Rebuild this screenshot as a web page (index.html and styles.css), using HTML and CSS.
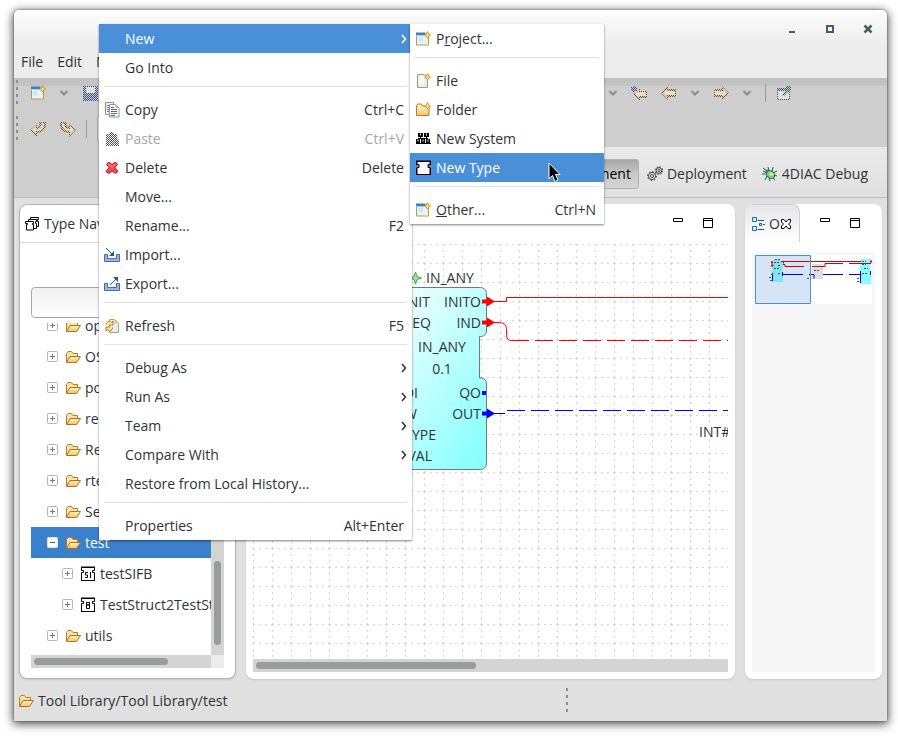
FILE: index.html
```html
<!DOCTYPE html>
<html lang="en">

<head>
    <meta charset="utf-8">
    <title>Type Navigator</title>
    <link rel="stylesheet" href="styles.css">
</head>

<body>

    <!-- icon set -->
    <svg class="icon-defs" width="0" height="0" aria-hidden="true">
        <defs>
            <linearGradient id="folder-fill" x1="0" y1="0" x2="0" y2="1">
                <stop offset="0" stop-color="#fff3c4" />
                <stop offset="1" stop-color="#f5c469" />
            </linearGradient>
            <linearGradient id="block-fill" x1="0" y1="0" x2="1" y2="1">
                <stop offset="0.2" stop-color="#eaffff" />
                <stop offset="1" stop-color="#80ffff" />
            </linearGradient>
            <pattern id="grid" width="19" height="19" patternUnits="userSpaceOnUse">
                <path d="M0 .5H19M.5 0V19" stroke="#d6d6d6" stroke-dasharray="2 4" fill="none" />
            </pattern>
            <pattern id="dither" width="2" height="2" patternUnits="userSpaceOnUse">
                <path d="M0 0h1v1H0zM1 1h1v1H1z" fill="#fbf3c8" />
            </pattern>
            <pattern id="dither-brown" width="2" height="2" patternUnits="userSpaceOnUse">
                <path d="M0 0h1v1H0zM1 1h1v1H1z" fill="#7d5210" />
            </pattern>
            <pattern id="dither-blue" width="2" height="2" patternUnits="userSpaceOnUse">
                <path d="M0 0h1v1H0zM1 1h1v1H1z" fill="#3a4f86" />
            </pattern>
            <pattern id="dither-gray" width="2" height="2" patternUnits="userSpaceOnUse">
                <path d="M0 0h1v1H0zM1 1h1v1H1z" fill="#55504c" />
            </pattern>
            <pattern id="dither-green" width="2" height="2" patternUnits="userSpaceOnUse">
                <path d="M0 0h1v1H0zM1 1h1v1H1z" fill="#2f6a35" />
            </pattern>
            <pattern id="dither-white" width="2" height="2" patternUnits="userSpaceOnUse">
                <path d="M0 0h1v1H0zM1 1h1v1H1z" fill="#f4f8fc" />
            </pattern>
            <symbol id="i-spark" viewBox="0 0 16 16">
                <path d="M12.500 0L14 2.500 16 4l-2 1.500L12.500 7.500 11 5.500 9 4l2-1.500z" fill="#c9970f" />
                <path d="M12.500 2v4M10.500 4h4" stroke="#fff3a8" fill="none" />
            </symbol>
            <symbol id="i-wizard" viewBox="0 0 16 16">
                <path d="M1.500 2.500h12v11.500h-12z" fill="#e6f3fc" stroke="#b99a48" />
                <path d="M3 6h5v4H3z" fill="#cde6f8" />
                <path d="M8 13c4-1 5-4 5-6v6.500z" fill="#fff0b8" />
                <path d="M1 1.500h9v3H1z" fill="#3f7cc4" />
                <path d="M1 4h9v1H1z" fill="#a8cdf0" />
                <use href="#i-spark" />
            </symbol>
            <symbol id="i-file" viewBox="0 0 16 16">
                <path d="M2.500 1.500h7l3 3v10h-10z" fill="#e4ebfa" stroke="#b09a5e" />
                <path d="M4 3h5v9H4z" fill="#f6f9ff" />
                <use href="#i-spark" />
            </symbol>
            <symbol id="i-newfolder" viewBox="0 0 16 16">
                <path d="M1.500 13.500v-10l1-1.500h4l1 2h6.500v9.500z" fill="url(#folder-fill)" stroke="#b9792c" />
                <path d="M2 6.500h12" stroke="#fff7d8" />
                <use href="#i-spark" />
            </symbol>
            <symbol id="i-folder" viewBox="0 0 16 16">
                <path d="M1.500 13V4.500L3 2.500h3.500l1.500 2h4.500V7" fill="#fbe3a0" stroke="#b87a30" />
                <path d="M1.500 13.500l3.500-6h10.500l-4 6z" fill="url(#folder-fill)" stroke="#b0701f" />
            </symbol>
            <symbol id="i-system" viewBox="0 0 16 16">
                <path d="M3 2h5v4H3zM9 2h5v4H9zM1 8h4v4H1zM6 8h4v4H6zM11 8h4v4h-4z" fill="#000" />
                <path d="M5.500 5v3M11.500 5v3M3 7.500h10" fill="none" stroke="#000" />
                <path d="M5 3.500h1M11 3.500h1M2.500 9.500h1M7.500 9.500h1M12.500 9.500h1" stroke="#fff" stroke-width="2" />
                <path d="M1 12.500h15" stroke="#000" />
            </symbol>
            <symbol id="i-block" viewBox="0 0 16 16">
                <path d="M2 1.500h13v3h-2v3h2v7H2v-7h2v-3H2z" fill="#fff" stroke="#000" />
                <path d="M1 1h15M1 14.500h15M1.500 8v6M15.500 8v6M1.500 1v4M15.500 1v4" stroke="#000" />
            </symbol>
            <symbol id="i-si" viewBox="0 0 16 16">
                <path d="M1.500 1.500h13v3h-2v2h2v8h-13v-8h2v-2h-2z" fill="#fff" stroke="#000" />
                <path d="M1 1h14M1 14.500h14" stroke="#000" />
                <path d="M8 6.500H5.500v2.500H7.500v2.500H5M10.500 6v6" fill="none" stroke="#000" />
            </symbol>
            <symbol id="i-basic" viewBox="0 0 16 16">
                <path d="M1.500 1.500h13v3h-2v2h2v8h-13v-8h2v-2h-2z" fill="#fff" stroke="#000" />
                <path d="M1 1h14M1 14.500h14" stroke="#000" />
                <path d="M6.500 5.500h3v2.500h-3zM6.500 8h3v3.500h-3z" fill="none" stroke="#000" />
            </symbol>
            <symbol id="i-copy" viewBox="0 0 16 16">
                <path d="M1.500 .500h8v12h-8z" fill="#eef3fc" stroke="#a8904e" />
                <path d="M3 3.500h3M3 5.500h2M3 7.500h2M3 9.500h2" stroke="#5272b8" />
                <path d="M5.500 2.500h6l3.500 3.500v9h-9.500z" fill="#fff" stroke="#8d93a8" />
                <path d="M11.500 2.500v3.500H15z" fill="#d9b55a" />
                <path d="M7 5.500h3M7 7.500h6M7 9.500h6M7 11.500h6M7 13.500h4" stroke="#4668b0" />
            </symbol>
            <symbol id="i-paste" viewBox="0 0 16 16">
                <path d="M2 3h3l1-2h3l1 2h3v4l2 2v6H2z" fill="url(#dither-gray)" />
                <path d="M7 7h5l2 2v6H7z" fill="url(#dither-blue)" />
            </symbol>
            <symbol id="i-delete" viewBox="0 0 16 16">
                <path d="M2.500 4l2.500-2 3 2.500L11 2l2.500 2-2.500 3.500 3 4-2.500 2L8 11l-3 2.500-3-2 3-4z" fill="#ee4a52" stroke="#c01c28" />
                <path d="M4 4l4 3L12 4" fill="none" stroke="#f79aa0" />
            </symbol>
            <symbol id="i-import" viewBox="0 0 16 16">
                <path d="M.500 7.500h3v4h9v-4h3v7H.500z" fill="#9db4de" stroke="#4a68a8" />
                <path d="M2 1l7 7" stroke="#2a5f9e" />
                <path d="M10 4v5H5z" fill="#175a9c" />
            </symbol>
            <symbol id="i-export" viewBox="0 0 16 16">
                <path d="M.500 7.500h3v4h9v-4h3v7H.500z" fill="#9db4de" stroke="#4a68a8" />
                <path d="M6 9l7-7" stroke="#2a5f9e" />
                <path d="M9 1h5v5z" fill="#175a9c" />
            </symbol>
            <symbol id="i-refresh" viewBox="0 0 16 16">
                <path d="M5.500 1.500h5l4 4v9h-9z" fill="#e6edfb" stroke="#b3a06b" />
                <path d="M10.500 1.500v4h4z" fill="#e6c878" />
                <path d="M2.500 6.500c0-4 4-4 5-2L9 3v4H5" fill="#ffe9a6" stroke="#b9780e" />
                <path d="M8.500 9.500c0 4-4 4-5 2L2 13V9h4" fill="#ffe9a6" stroke="#b9780e" />
            </symbol>
            <symbol id="i-left" viewBox="0 0 16 16">
                <path d="M0 8l7-7v3h8v8H7v3z" fill="url(#dither-brown)" />
                <path d="M2 8l4-4v2h8v4H6v2z" fill="#cecece" />
                <path d="M2 8l4-4v2h8v4H6v2z" fill="url(#dither)" />
            </symbol>
            <symbol id="i-right" viewBox="0 0 16 16">
                <path d="M16 8L9 1v3H1v8h8v3z" fill="url(#dither-brown)" />
                <path d="M14 8l-4-4v2H2v4h8v2z" fill="#cecece" />
                <path d="M14 8l-4-4v2H2v4h8v2z" fill="url(#dither)" />
            </symbol>
            <symbol id="i-lastedit" viewBox="0 0 16 16">
                <path d="M2 9l7-6v3h7v7H9v3z" fill="url(#dither-brown)" />
                <path d="M4 9l4-4v2h7v4H8v2z" fill="#cecece" />
                <path d="M4 9l4-4v2h7v4H8v2z" fill="url(#dither)" />
                <path d="M0 2h6v4H0zM2 1h2v6H2z" fill="url(#dither-blue)" />
            </symbol>
            <symbol id="i-undo" viewBox="0 0 16 16">
                <path d="M0 9l7-6v3c2 0 3-2 2-5h7c1 6-3 11-9 11v4z" fill="url(#dither-brown)" />
                <path d="M2 9l4-4v3c4 0 6-2 6-6h2c0 5-3 8-8 8v3z" fill="#cecece" />
                <path d="M2 9l4-4v3c4 0 6-2 6-6h2c0 5-3 8-8 8v3z" fill="url(#dither)" />
            </symbol>
            <symbol id="i-redo" viewBox="0 0 16 16">
                <path d="M16 9L9 3v3C7 6 6 4 7 1H0c-1 6 3 11 9 11v4z" fill="url(#dither-brown)" />
                <path d="M14 9l-4-4v3C6 8 4 6 4 2H2c0 5 3 8 8 8v3z" fill="#cecece" />
                <path d="M14 9l-4-4v3C6 8 4 6 4 2H2c0 5 3 8 8 8v3z" fill="url(#dither)" />
            </symbol>
            <symbol id="i-save" viewBox="0 0 16 16">
                <path d="M1 1h15v15H1z" fill="url(#dither-blue)" />
                <path d="M4 2h9v6H4z" fill="#cecece" />
                <path d="M4 2h9v6H4z" fill="url(#dither-white)" />
            </symbol>
            <symbol id="i-pin" viewBox="0 0 16 16">
                <path d="M1 3h13v12H1z" fill="url(#dither-gray)" />
                <path d="M2 6h11v8H2z" fill="#cecece" />
                <path d="M2 6h11v8H2z" fill="url(#dither-white)" />
                <path d="M1 3h8v3H1z" fill="url(#dither-blue)" />
                <path d="M10 1h5v5l-3 1-4 4-2-1 4-5z" fill="url(#dither-green)" />
            </symbol>
            <symbol id="i-chevron" viewBox="0 0 16 16">
                <path d="M4.500 6L8 9.500 11.500 6" fill="none" stroke="#8c8e8e" stroke-width="2" />
            </symbol>
            <symbol id="i-types" viewBox="0 0 16 16">
                <path d="M6.500 1.500h8v2h-1v2h1v5h-8z" fill="#fff" stroke="#000" />
                <path d="M4.500 3.500h8v2h-1v2h1v5h-8z" fill="#fff" stroke="#000" />
                <path d="M1.500 5.500h8v2h-1v1h1v5.500h-7v-5.500h1v-1h-2z" fill="#fff" stroke="#000" />
            </symbol>
            <symbol id="i-gears" viewBox="0 0 16 16">
                <circle cx="5" cy="10" r="3.500" fill="#fff" stroke="#333" />
                <circle cx="5" cy="10" r="4.500" fill="none" stroke="#333" stroke-dasharray="1.500 2" />
                <circle cx="5" cy="10" r="1.500" fill="#fff" stroke="#333" />
                <circle cx="12" cy="4.500" r="2.800" fill="#fff" stroke="#333" />
                <circle cx="12" cy="4.500" r="3.800" fill="none" stroke="#333" stroke-dasharray="1.500 1.500" />
                <circle cx="12" cy="4.500" r="1" fill="#fff" stroke="#333" />
            </symbol>
            <symbol id="i-bug" viewBox="0 0 16 16">
                <path d="M1 2l4 3M6 1l1 4M11 1l-1 5M15 5l-4 2M15 10l-4-1M13 14l-3-3M8 15l-1-4M3 14l2-4M0 8h5M1 5l4 2" stroke="#1f5a52" fill="none" />
                <ellipse cx="8.500" cy="8.500" rx="4.500" ry="3.500" transform="rotate(40 8.500 8.500)" fill="#8fd06c" stroke="#17705f" />
                <ellipse cx="9.500" cy="8" rx="2" ry="1.500" fill="#e2f7b0" />
                <circle cx="5" cy="5" r="1.500" fill="#247c78" />
            </symbol>
            <symbol id="i-outline" viewBox="0 0 16 16">
                <path d="M1.500 1.500h4v4h-4zM1.500 10.500h4v4h-4z" fill="#d8ecfa" stroke="#1b6fa8" />
                <path d="M8.500 7.500h2v2h-2z" fill="#fff" stroke="#14578a" />
                <path d="M7 4.500h6M12 8.500h2M7 13.500h6" stroke="#14578a" />
            </symbol>
            <symbol id="i-close" viewBox="0 0 16 16">
                <path d="M3.500 3.500h2.500l2 2.500 2-2.500h2.500v2.500l-2 2 2 2v2.500H10l-2-2.500-2 2.500H3.500V10l2-2-2-2z" fill="#fff" stroke="#000" />
            </symbol>
            <symbol id="i-min" viewBox="0 0 16 16">
                <path d="M3.500 3.500h9v3h-9z" fill="#fff" stroke="#000" />
            </symbol>
            <symbol id="i-max" viewBox="0 0 16 16">
                <path d="M3.500 3.500h9v9h-9zM3.500 5.500h9" fill="#fff" stroke="#000" />
            </symbol>
            <symbol id="i-plus" viewBox="0 0 16 16">
                <rect x="2.500" y="2.500" width="10" height="10" rx="1" fill="#fff" stroke="#b4b4b4" />
                <path d="M5 7.500h5M7.500 5v5" stroke="#777" />
            </symbol>
            <symbol id="i-minus" viewBox="0 0 16 16">
                <rect x="2.500" y="2.500" width="10" height="10" rx="1" fill="#fff" stroke="#d8e4f0" />
                <path d="M5 7.500h5" stroke="#555" />
            </symbol>
        </defs>
    </svg>

    <div class="window">
        <header class="titlebar">
            <div class="window-controls">
                <button type="button" aria-label="Minimize"><svg class="icon"><path d="M5 10h6v2H5z" fill="#4b5c64" /></svg></button>
                <button type="button" aria-label="Maximize"><svg class="icon"><path d="M5 5h6v6H5z" fill="none" stroke="#4b5c64" stroke-width="2" /></svg></button>
                <button type="button" aria-label="Close"><svg class="icon"><path d="M4.500 4.500l7 7M11.500 4.500l-7 7" stroke="#4b5c64" stroke-width="2.500" /></svg></button>
            </div>
            <nav class="menubar">
                <button type="button">File</button>
                <button type="button">Edit</button>
                <button type="button">Navigate</button>
            </nav>
        </header>

        <div class="toolbar">
            <div class="tool-row">
                <span class="grip"></span>
                <button type="button" aria-label="New"><svg class="icon"><use href="#i-wizard" /></svg></button>
                <button type="button" aria-label="New options"><svg class="icon"><use href="#i-chevron" /></svg></button>
                <button type="button" aria-label="Save"><svg class="icon"><use href="#i-save" /></svg></button>
                <div class="tool-history">
                    <button type="button" aria-label="More"><svg class="icon"><use href="#i-chevron" /></svg></button>
                    <button type="button" aria-label="Last edit"><svg class="icon"><use href="#i-lastedit" /></svg></button>
                    <button type="button" class="spaced" aria-label="Back"><svg class="icon"><use href="#i-left" /></svg></button>
                    <button type="button" aria-label="Back history"><svg class="icon"><use href="#i-chevron" /></svg></button>
                    <button type="button" aria-label="Forward"><svg class="icon"><use href="#i-right" /></svg></button>
                    <button type="button" aria-label="Forward history"><svg class="icon"><use href="#i-chevron" /></svg></button>
                    <span class="tool-sep"></span>
                    <button type="button" aria-label="Pin editor"><svg class="icon"><use href="#i-pin" /></svg></button>
                </div>
            </div>
            <div class="tool-row">
                <span class="grip"></span>
                <button type="button" aria-label="Undo"><svg class="icon"><use href="#i-undo" /></svg></button>
                <button type="button" class="spaced" aria-label="Redo"><svg class="icon"><use href="#i-redo" /></svg></button>
                <span class="tool-sep"></span>
                <input class="zoom-box" type="text" aria-label="Zoom">
            </div>
        </div>

        <div class="perspectives">
            <div class="perspective-list">
                <button type="button" class="active">Type Management</button>
                <button type="button"><svg class="icon"><use href="#i-gears" /></svg>Deployment</button>
                <button type="button"><svg class="icon"><use href="#i-bug" /></svg>4DIAC Debug</button>
            </div>
        </div>

        <main class="workbench">
            <section class="panel navigator">
                <div class="tabs">
                    <span class="tab"><svg class="icon"><use href="#i-types" /></svg>Type Navigator</span>
                </div>
                <input class="filter" type="text" aria-label="Filter types">
                <div class="tree-scroll">
                    <ul class="tree">
                        <li><svg class="icon"><use href="#i-plus" /></svg><svg class="icon"><use href="#i-folder" /></svg>opc</li>
                        <li><svg class="icon"><use href="#i-plus" /></svg><svg class="icon"><use href="#i-folder" /></svg>OSCAT</li>
                        <li><svg class="icon"><use href="#i-plus" /></svg><svg class="icon"><use href="#i-folder" /></svg>pop</li>
                        <li><svg class="icon"><use href="#i-plus" /></svg><svg class="icon"><use href="#i-folder" /></svg>rec</li>
                        <li><svg class="icon"><use href="#i-plus" /></svg><svg class="icon"><use href="#i-folder" /></svg>Res</li>
                        <li><svg class="icon"><use href="#i-plus" /></svg><svg class="icon"><use href="#i-folder" /></svg>rtev</li>
                        <li><svg class="icon"><use href="#i-plus" /></svg><svg class="icon"><use href="#i-folder" /></svg>Seg</li>
                        <li class="selected"><svg class="icon"><use href="#i-minus" /></svg><svg class="icon"><use href="#i-folder" /></svg>test</li>
                        <li class="child"><svg class="icon"><use href="#i-plus" /></svg><svg class="icon"><use href="#i-si" /></svg>testSIFB</li>
                        <li class="child"><svg class="icon"><use href="#i-plus" /></svg><svg class="icon"><use href="#i-basic" /></svg>TestStruct2TestStruct</li>
                        <li><svg class="icon"><use href="#i-plus" /></svg><svg class="icon"><use href="#i-folder" /></svg>utils</li>
                    </ul>
                    <div class="vscroll"><span class="thumb"></span></div>
                    <div class="hscroll"><span class="thumb"></span></div>
                    <div class="corner"></div>
                </div>
            </section>

            <section class="panel editor">
                <div class="panel-buttons">
                    <button type="button" aria-label="Minimize view"><svg class="icon"><use href="#i-min" /></svg></button>
                    <button type="button" aria-label="Maximize view"><svg class="icon"><use href="#i-max" /></svg></button>
                </div>
                <svg class="canvas">
                    <rect width="100%" height="100%" fill="url(#grid)" />
                    <path d="M162.500 28l1.500 4.500 4.500 1.500-4.500 1.500-1.500 4.500-1.500-4.500-4.500-1.500 4.500-1.500z" fill="#a8dca8" stroke="#3da83d" />
                    <text x="173" y="39">IN_ANY</text>
                    <path d="M117.500 49.500a6 6 0 0 1 6-6h104a6 6 0 0 1 6 6V87a6 6 0 0 1-5 5.500h-2V134h2a6 6 0 0 1 5 6v79.500a6 6 0 0 1-6 6h-104a6 6 0 0 1-6-6z" fill="url(#block-fill)" stroke="#6d7a7a" />
                    <g text-anchor="end">
                        <text x="177" y="63">INIT</text>
                        <text x="178" y="84">REQ</text>
                        <text x="165" y="154">QI</text>
                        <text x="164" y="175">W</text>
                        <text x="183" y="196">TYPE</text>
                        <text x="179" y="217">VAL</text>
                        <text x="228" y="63">INITO</text>
                        <text x="228" y="84">IND</text>
                        <text x="228" y="154">QO</text>
                        <text x="228" y="175">OUT</text>
                    </g>
                    <g text-anchor="middle">
                        <text x="189" y="108">IN_ANY</text>
                        <text x="189" y="130">0.1</text>
                    </g>
                    <!-- event connections -->
                    <path d="M229 55.500h5v-3l8 5-8 5v-3h-5zM229 76.500h5v-3l8 5-8 5v-3h-5z" fill="#f00" />
                    <path d="M240 57.500h13.500v-4H1600M240 78.500h6q7.500 0 7.500 7v5q0 6 5 6" fill="none" stroke="#f00" />
                    <path d="M258 96.500H1600" fill="none" stroke="#f00" stroke-dasharray="18 6" />
                    <!-- data connections -->
                    <path d="M229 147h4v4h-4zM229 167.500h5v-3l8 5-8 5v-3h-5z" fill="#00f" />
                    <path d="M240 169.500h12" fill="none" stroke="#00a" />
                    <path d="M254 166.500H1600" fill="none" stroke="#00f" stroke-dasharray="18 6" />
                    <path d="M446 181h70v15h-70z" fill="#fff" />
                    <text x="446" y="193">INT#</text>
                </svg>
                <div class="hscroll"><span class="thumb"></span></div>
            </section>

            <section class="panel outline">
                <div class="panel-head">
                    <span class="tab"><svg class="icon"><use href="#i-outline" /></svg>O<svg class="icon close"><use href="#i-close" /></svg></span>
                    <div class="panel-buttons">
                        <button type="button" aria-label="Minimize outline"><svg class="icon"><use href="#i-min" /></svg></button>
                        <button type="button" aria-label="Maximize outline"><svg class="icon"><use href="#i-max" /></svg></button>
                    </div>
                </div>
                <div class="overview">
                    <svg class="thumbnail" viewBox="0 0 123 56">
                        <path d="M3 3h117v49H3z" fill="#fff" />
                        <path d="M3.500 3.500h55v48h-55z" fill="#d6e5f5" />
                        <path d="M20 8h9v2h2v6h-1v5h1v9H20z" fill="#84e3ec" />
                        <path d="M60 12h11v15H60z" fill="#dedede" />
                        <path d="M108 7h11v7h-1v4h1v14h-11z" fill="#8ff" />
                        <path d="M29 9.500h80M31 12.500h2v2h19M60 14.500h13v-3h18M97 11.500h22" fill="none" stroke="#d00" />
                        <path d="M31 22.500h20M57 22.500h5v4M71 22.500h20M97 22.500h12M20.500 21v8M30.500 20v4M108.500 19v12M118.500 19v4" fill="none" stroke="#00d" />
                        <path d="M23 7.500h5M22 10.500h6M20 13.500h3M26 13.500h3M22 16.500h5M19 22.500h3M26 21.500h3M17 25.500h2M18 28.500h2M62 14.500h6M62 18.500h5M55 26.500h3M110 9.500h4M110 12.500h4M112 16.500h4M110 21.500h5M105 26.500h3M105 29.500h3" fill="none" stroke="#456" stroke-dasharray="2 1" />
                        <path d="M19 10.500h2M19 13.500h2M31 10.500h1M118 9.500h2" fill="none" stroke="#d00" stroke-width="2" />
                        <path d="M3.500 3.500h55v48h-55z" fill="none" stroke="#4a8fd8" />
                    </svg>
                </div>
            </section>
        </main>

        <footer class="statusbar">
            <svg class="icon"><use href="#i-folder" /></svg>
            <span class="status-path">Tool Library/Tool Library/test</span>
            <span class="grip"></span>
        </footer>
    </div>

    <!-- context menu -->
    <ul class="menu context-menu">
        <li><button type="button" class="highlight"><span class="label">New</span><svg class="arrow"><path d="M1 1l3.500 4L1 9" /></svg></button></li>
        <li><button type="button"><span class="label">Go Into</span></button></li>
        <li class="separator"></li>
        <li><button type="button"><svg class="icon"><use href="#i-copy" /></svg><span class="label">Copy</span><kbd>Ctrl+C</kbd></button></li>
        <li><button type="button" disabled><svg class="icon"><use href="#i-paste" /></svg><span class="label">Paste</span><kbd>Ctrl+V</kbd></button></li>
        <li><button type="button"><svg class="icon"><use href="#i-delete" /></svg><span class="label">Delete</span><kbd>Delete</kbd></button></li>
        <li><button type="button"><span class="label">Move...</span></button></li>
        <li><button type="button"><span class="label">Rename...</span><kbd>F2</kbd></button></li>
        <li><button type="button"><svg class="icon"><use href="#i-import" /></svg><span class="label">Import...</span></button></li>
        <li><button type="button"><svg class="icon"><use href="#i-export" /></svg><span class="label">Export...</span></button></li>
        <li class="separator"></li>
        <li><button type="button"><svg class="icon"><use href="#i-refresh" /></svg><span class="label">Refresh</span><kbd>F5</kbd></button></li>
        <li class="separator"></li>
        <li><button type="button"><span class="label">Debug As</span><svg class="arrow"><path d="M1 1l3.500 4L1 9" /></svg></button></li>
        <li><button type="button"><span class="label">Run As</span><svg class="arrow"><path d="M1 1l3.500 4L1 9" /></svg></button></li>
        <li><button type="button"><span class="label">Team</span><svg class="arrow"><path d="M1 1l3.500 4L1 9" /></svg></button></li>
        <li><button type="button"><span class="label">Compare With</span><svg class="arrow"><path d="M1 1l3.500 4L1 9" /></svg></button></li>
        <li><button type="button"><span class="label">Restore from Local History...</span></button></li>
        <li class="separator"></li>
        <li><button type="button"><span class="label">Properties</span><kbd>Alt+Enter</kbd></button></li>
    </ul>

    <ul class="menu sub-menu">
        <li><button type="button"><svg class="icon"><use href="#i-wizard" /></svg><span class="label">P<u>r</u>oject...</span></button></li>
        <li class="separator"></li>
        <li><button type="button"><svg class="icon"><use href="#i-file" /></svg><span class="label">File</span></button></li>
        <li><button type="button"><svg class="icon"><use href="#i-newfolder" /></svg><span class="label">Folder</span></button></li>
        <li><button type="button"><svg class="icon"><use href="#i-system" /></svg><span class="label">New System</span></button></li>
        <li><button type="button" class="highlight"><svg class="icon"><use href="#i-block" /></svg><span class="label">New Type</span></button></li>
        <li class="separator"></li>
        <li><button type="button"><svg class="icon"><use href="#i-wizard" /></svg><span class="label"><u>O</u>ther...</span><kbd>Ctrl+N</kbd></button></li>
    </ul>

    <svg class="pointer" width="13" height="21" aria-hidden="true">
        <path d="M1 1v16l3.500-3.500 2.500 6 3-1.500-2.500-5.500H12z" fill="#000" stroke="#fff" />
    </svg>

</body>

</html>
```

FILE: styles.css
```css
* {
    box-sizing: border-box;
}

body {
    margin: 0;
    height: 100vh;
    padding: 10px 11px 17px 14px;
    display: flex;
    position: relative;
    overflow: hidden;
    background: #fff;
    color: #2e3436;
    font: 14px/20px "Open Sans", "Noto Sans", sans-serif;
}

ul {
    list-style: none;
    margin: 0;
    padding: 0;
}

button {
    font: inherit;
    color: inherit;
    background: none;
    border: none;
    padding: 0;
    display: flex;
    align-items: center;
    white-space: nowrap;
}

.icon-defs {
    position: absolute;
}

.icon {
    width: 16px;
    height: 16px;
    flex: none;
    display: block;
}

/* window frame */

.window {
    flex: 1;
    min-width: 0;
    display: flex;
    flex-direction: column;
    background: #e0e0e0;
    border-radius: 5px 5px 0 0;
    box-shadow: 0 0 2px #555, 0 2px 10px 1px rgba(0, 0, 0, 0.7);
}

.titlebar {
    height: 68px;
    padding: 11px 11px 6px 0;
    border-radius: 5px 5px 0 0;
    background: linear-gradient(#fefefe, #ededed 50%, #ededed);
    display: flex;
    flex-direction: column;
    justify-content: space-between;
}

.window-controls {
    display: flex;
    justify-content: flex-end;
    gap: 22px;
}

.menubar {
    display: flex;
    gap: 14px;
    padding-left: 7px;
}

/* toolbar */

.toolbar {
    height: 69px;
    background: linear-gradient(#c0c0c0, #c4c4c4 8px, #cecece 8px);
}

.tool-row {
    display: flex;
    align-items: center;
    gap: 10px;
    height: 42px;
    padding-left: 2px;
}

.tool-row:first-child {
    height: 30px;
}

.tool-row .grip {
    margin-right: 2px;
}

.tool-row .spaced {
    margin-left: 4px;
}

.grip {
    width: 2px;
    height: 26px;
    background: repeating-linear-gradient(#8f8f88 0 3px, transparent 3px 7px);
}

.tool-history {
    margin-left: auto;
    padding-right: 95px;
    display: flex;
    align-items: center;
    gap: 10px;
}

.tool-sep {
    width: 1px;
    height: 18px;
    background: #9c9c9c;
}

.zoom-box {
    height: 30px;
    width: 120px;
    border: 1px solid #aaa;
    border-radius: 4px;
    background: #eee;
}

.perspectives {
    height: 50px;
    display: flex;
    justify-content: flex-end;
    align-items: center;
    padding: 3px 19px 0 0;
    background: linear-gradient(90deg, #cecece 45%, transparent 45%), linear-gradient(#eaeaea, #e0e0e0);
}

.perspective-list {
    display: flex;
    gap: 8px;
}

.perspective-list button {
    gap: 4px;
    height: 30px;
}

.perspective-list button + button + button {
    margin-left: 7px;
}

.perspective-list .active {
    padding: 0 7px 0 30px;
    border: 1px solid #b0b2b0;
    border-radius: 3px;
    color: #000;
    background: linear-gradient(#a4a8a5, #c8cac8 50%, #d4d5d4);
}

/* panels */

.workbench {
    flex: 1;
    min-height: 0;
    display: grid;
    grid-template-columns: minmax(0, 217fr) minmax(0, 489fr) minmax(0, 137fr);
    grid-template-rows: minmax(0, 1fr);
    gap: 10px;
    padding: 6px 5px 7px;
    border-top: 1px solid #bdbdbd;
}

.panel {
    min-height: 0;
    display: flex;
    flex-direction: column;
    background: #fff;
    border-radius: 8px;
    overflow: hidden;
    box-shadow: 0 1px 2px rgba(0, 0, 0, 0.12);
}

.navigator {
    border: 1px solid #b4b4b4;
    padding: 0 11px 10px;
}

.tabs {
    height: 38px;
    margin: 0 -11px;
    padding-left: 4px;
    display: flex;
    align-items: center;
    border-bottom: 1px solid #dcdcdc;
}

.tab {
    display: flex;
    align-items: center;
    gap: 4px;
    white-space: nowrap;
}

.filter {
    margin: 44px 0 5px;
    height: 31px;
    border: 1px solid #a8a8a8;
    border-radius: 4px;
    background: linear-gradient(#f0f0f0, #fff);
    font: inherit;
}

.tree-scroll {
    flex: 1;
    min-height: 0;
    display: grid;
    grid-template-columns: minmax(0, 1fr) 13px;
    grid-template-rows: minmax(0, 1fr) 13px;
}

/* scrolled part way into the first row */
.tree {
    overflow: hidden;
    display: flex;
    flex-direction: column;
    justify-content: flex-end;
    padding-bottom: 4px;
}

.tree li {
    flex: none;
    height: 31px;
    padding-left: 14px;
    display: flex;
    align-items: center;
    gap: 4px;
    white-space: nowrap;
}

.tree li.child {
    padding-left: 29px;
}

.tree .selected {
    background: #3a80cc;
    color: #fff;
}

.vscroll,
.hscroll {
    display: flex;
    background: #d4d4d4;
}

.hscroll {
    height: 13px;
    padding: 3px;
}

.vscroll {
    padding: 10px 3px;
    align-items: flex-end;
}

.thumb {
    border-radius: 4px;
    background: #9a9b9d;
}

.hscroll .thumb {
    width: 77%;
}

.vscroll .thumb {
    width: 100%;
    height: 27%;
}

.corner {
    background: #ececec;
}

.editor {
    padding: 0 7px 7px;
}

.panel-buttons {
    display: flex;
    justify-content: flex-end;
    gap: 14px;
    padding: 11px 12px 13px 0;
}

.canvas {
    width: 100%;
    flex: 1;
    min-height: 0;
    display: block;
}

.canvas text {
    fill: #2e3436;
}

.editor .hscroll .thumb {
    width: 47%;
}

.panel-head {
    display: flex;
    justify-content: space-between;
}

.outline .tab {
    height: 38px;
    padding: 0 5px 0 6px;
    gap: 2px;
    border: 1px solid #cfcfdb;
    border-bottom: none;
    border-left: none;
    border-radius: 8px 8px 0 0;
    background: linear-gradient(#e6e6e8, #fff);
}

.outline .close {
    margin-left: -4px;
}

.outline .panel-buttons {
    padding-right: 19px;
}

.overview {
    flex: 1;
    margin: 8px 7px 7px;
    background: #f7f7f7;
}

.thumbnail {
    width: 100%;
    display: block;
}

/* status bar */

.statusbar {
    height: 35px;
    padding: 0 319px 5px 4px;
    display: flex;
    align-items: center;
    gap: 4px;
}

.status-path {
    flex: 1;
}

/* popup menus */

.menu {
    position: absolute;
    top: 24px;
    background: #fff;
    box-shadow: 0 1px 2px rgba(0, 0, 0, 0.5);
}

.context-menu {
    left: 99px;
    width: 313px;
}

.sub-menu {
    left: 410px;
    width: 194px;
}

.menu button {
    width: 100%;
    height: 29px;
    padding: 0 8px 0 26px;
}

.menu .label {
    flex: 1;
    text-align: left;
}

.menu .icon {
    margin: 0 5px 0 -21px;
}

.menu kbd {
    font: inherit;
}

.menu button:disabled {
    color: #a5a7a8;
}

.menu .highlight {
    background: #4a90d9;
    color: #fff;
}

.menu .separator {
    height: 13px;
    margin: 0 5px;
    border-top: 4px solid #fff;
    background: linear-gradient(#e2e2e2 1px, #fff 1px);
}

.arrow {
    width: 6px;
    height: 10px;
    margin-right: -3px;
    fill: none;
    stroke: currentColor;
    stroke-width: 1.5;
}

.pointer {
    position: absolute;
    left: 548px;
    top: 162px;
}
```
